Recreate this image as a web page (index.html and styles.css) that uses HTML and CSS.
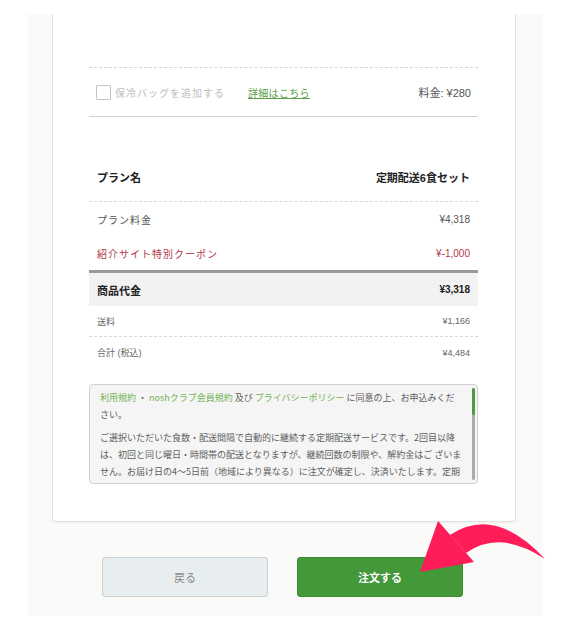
FILE: index.html
```html
<!DOCTYPE html>
<html lang="ja">
<head>
<meta charset="utf-8">
<title>ご注文内容の確認</title>
<link rel="stylesheet" href="styles.css">
</head>
<body>
<div class="panel">
  <div class="card">
    <div class="option-row">
      <label class="option-check"><span class="checkbox"></span><span class="option-label">保冷バッグを追加する</span></label>
      <a class="detail-link" href="#">詳細はこちら</a>
      <span class="option-price">料金: ¥280</span>
    </div>

    <div class="summary">
      <div class="row row-head">
        <span>プラン名</span>
        <span>定期配送6食セット</span>
      </div>
      <div class="row row-main">
        <span class="label">プラン料金</span>
        <span class="num">¥4,318</span>
      </div>
      <div class="row row-main row-coupon">
        <span class="label">紹介サイト特別クーポン</span>
        <span class="num">¥-1,000</span>
      </div>
      <div class="row row-subtotal">
        <span>商品代金</span>
        <span class="num">¥3,318</span>
      </div>
      <div class="row row-small row-shipping">
        <span class="label">送料</span>
        <span class="num">¥1,166</span>
      </div>
      <div class="row row-small">
        <span class="label">合計 (税込)</span>
        <span class="num">¥4,484</span>
      </div>
    </div>

    <div class="terms">
      <div class="terms-body">
        <p><a href="#">利用規約</a> ・ <a href="#">noshクラブ会員規約</a> 及び <a href="#">プライバシーポリシー</a> に同意の上、お申込みくだ<br>さい。</p>
        <p>ご選択いただいた食数・配送間隔で自動的に継続する定期配送サービスです。2回目以降<br>は、初回と同じ曜日・時間帯の配送となりますが、継続回数の制限や、解約金はご ざいま<br>せん。お届け日の4〜5日前（地域により異なる）に注文が確定し、決済いたします。定期<br>配送を継続された場合のお支払総額は <a href="#">こちら</a> 、停止・解約については <a href="#">こちら</a> をご確認く<br>ださい。</p>
      </div>
      <div class="scroll-track"><div class="scroll-thumb"></div></div>
    </div>
  </div>

  <div class="actions">
    <button class="btn btn-back" type="button">戻る</button>
    <button class="btn btn-order" type="button">注文する</button>
  </div>

  <svg class="pointer" width="150" height="70" viewBox="0 0 150 70" aria-hidden="true">
    <path d="M38 16 L20 67 L74 57 Z" fill="#fe1d58"/>
    <path d="M50 30 Q95 0 145 54 Q100 24 66 48 Z" fill="#fe1d58"/>
  </svg>
</div>
</body>
</html>
```
FILE: styles.css
```css
* { box-sizing: border-box; }

html, body {
  margin: 0;
  padding: 0;
  background: #ffffff;
}

body {
  font-family: "Liberation Sans", "Noto Sans CJK JP", sans-serif;
  color: #333;
}

.panel {
  position: relative;
  width: 515px;
  height: 602px;
  margin: 14px 0 0 28px;
  padding: 0 27px 0 24px;
  background: #fafaf9;
}

.card {
  background: #fff;
  border: 1px solid #e1e1e1;
  border-top: none;
  border-radius: 0 0 4px 4px;
  box-shadow: 0 1px 2px rgba(0, 0, 0, 0.05);
  padding: 53px 37px 37px 36px;
}

/* option row */
.option-row {
  display: flex;
  align-items: center;
  height: 50px;
  padding: 0 7px 0 7px;
  border-top: 1px dashed #d4d4d4;
  border-bottom: 1px solid #cfcfcf;
}

.option-check {
  display: flex;
  align-items: center;
}

.checkbox {
  width: 15px;
  height: 15px;
  border: 1.5px solid #c3c3c3;
  border-radius: 1px;
  margin-right: 4px;
}

.option-label {
  font-size: 10px;
  letter-spacing: 1px;
  color: #bdbdbd;
}

.detail-link {
  margin-left: 23px;
  font-size: 10px;
  letter-spacing: 0.3px;
  color: #5c9e4a;
  text-decoration: underline;
}

.option-price {
  margin-left: auto;
  font-size: 11px;
  color: #555;
}

/* summary table */
.summary {
  margin-top: 35px;
}

.row {
  display: flex;
  justify-content: space-between;
  align-items: center;
  padding: 0 8px;
}

.row-head {
  height: 50px;
  font-size: 11px;
  font-weight: bold;
  color: #222;
  border-bottom: 1px dashed #d8d8d8;
}

.row-main {
  height: 34px;
  font-size: 10px;
  color: #555;
}

.row-main .label {
  letter-spacing: 1px;
}

.row-coupon {
  color: #b3364c;
}

.row-subtotal {
  height: 36px;
  font-size: 11px;
  font-weight: bold;
  color: #222;
  background: #f2f2f2;
  border-top: 3px solid #9a9a9a;
}

.row-subtotal .num {
  font-size: 10px;
}

.row-small {
  height: 31px;
  font-size: 9px;
  color: #666;
}

.row-shipping {
  border-bottom: 1px dashed #d8d8d8;
}

/* terms box */
.terms {
  position: relative;
  margin-top: 16px;
  height: 100px;
  background: #f5f5f5;
  border: 1px solid #cfcfcf;
  border-radius: 4px;
  overflow: hidden;
}

.terms-body {
  height: 98px;
  overflow: hidden;
  padding: 4px 14px 0 10px;
  font-family: "Noto Sans CJK JP", sans-serif;
  font-size: 9px;
  line-height: 17px;
  color: #5e5e5e;
  white-space: nowrap;
}

.terms-body p {
  margin: 0 0 6px 0;
}

.terms-body a {
  color: #74b255;
  text-decoration: none;
}

/* scrollbar indicator drawn over the box edge */
.scroll-track {
  position: absolute;
  top: 3px;
  bottom: 3px;
  right: 2px;
  width: 3px;
  border-radius: 2px;
  background: #ababab;
}

.scroll-thumb {
  height: 27px;
  border-radius: 2px;
  background: #4a9c3f;
}

/* buttons */
.actions {
  display: flex;
  gap: 29px;
  margin-top: 35px;
  padding-left: 50px;
}

.btn {
  height: 40px;
  border-radius: 3px;
  font-family: "Liberation Sans", "Noto Sans CJK JP", sans-serif;
  font-size: 11px;
  cursor: pointer;
}

.btn-back {
  width: 166px;
  background: #e8edef;
  border: 1px solid #c9cfd2;
  color: #8a8a8a;
}

.btn-order {
  width: 166px;
  background: #43983a;
  border: 1px solid #3d8d35;
  color: #fff;
  font-weight: bold;
}

/* annotation arrow overlay */
.pointer {
  position: absolute;
  left: 372px;
  top: 491px;
}
```
